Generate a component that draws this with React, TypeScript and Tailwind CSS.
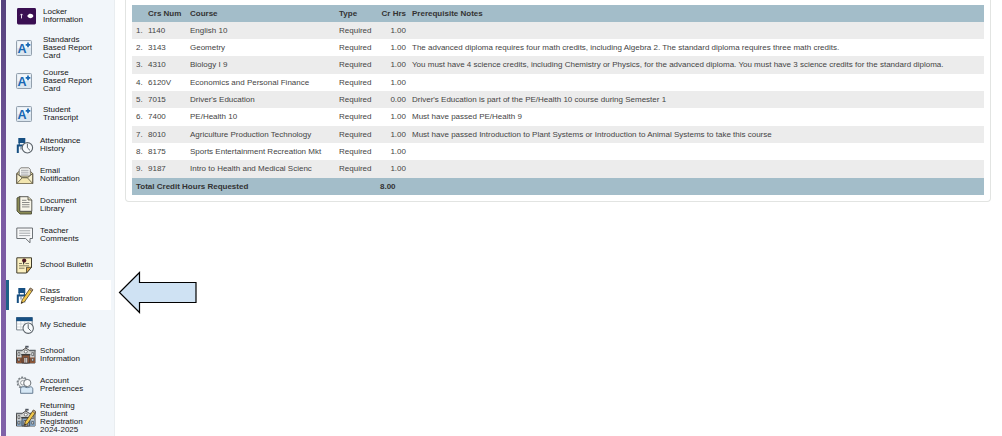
import type { ReactNode } from "react";

function Icon({ children }: { children: ReactNode }) {
  return (
    <svg viewBox="0 0 20 20" className="h-5 w-5 shrink-0" aria-hidden="true">
      {children}
    </svg>
  );
}

function Clock({ x, y }: { x: number; y: number }) {
  return (
    <g transform={`translate(${x} ${y})`}>
      <circle r="5.2" fill="#f7fafc" stroke="#5c646b" strokeWidth="1.1" />
      <path d="M0-4V0L2.6 2.6" fill="none" stroke="#5c646b" strokeWidth="1" />
    </g>
  );
}

function Pencil() {
  return (
    <g strokeLinejoin="round">
      <path d="M7.8 18.4L8.8 14.8L16.8 3.2L19.4 5L11.2 16.6Z" fill="#f2c84b" stroke="#4c3d20" strokeWidth=".8" />
      <path d="M15.9 4.5L17 2.9L19.6 4.7L18.5 6.3Z" fill="#b9a08a" stroke="#4c3d20" strokeWidth=".5" />
      <path d="M7.8 18.4L8.3 16.5L9.6 17.4Z" fill="#222" />
    </g>
  );
}

function LockerIcon() {
  return (
    <Icon>
      <rect x="1" y="2" width="19" height="16.5" rx="1.4" fill="#3a0f52" />
      <path d="M5.5 8v4.4M4.4 9.2l1.1-1.3 1.1 1.3" stroke="#e8deee" strokeWidth="1" fill="none" />
      <path d="M11.2 10c1-1.6 2-2.2 3.3-2.2s2.5.9 2.9 2.2c-.4 1.3-1.6 2.2-2.9 2.2s-2.3-.6-3.3-2.2Z" fill="#fff" />
    </Icon>
  );
}

function GradeIcon() {
  return (
    <Icon>
      <rect x="0.5" y="2.5" width="15" height="15" rx="1" fill="#dbe6ef" stroke="#93a0ad" />
      <path d="M1.5 3.5h13v6.5h-13z" fill="#f2f6fa" />
      <text x="1.6" y="14.6" fontSize="12.5" fontWeight="700" fontFamily="Liberation Sans, sans-serif" fill="#1767b3">
        A
      </text>
      <path d="M12 4.6v4.6M9.7 6.9h4.6" stroke="#1767b3" strokeWidth="1.7" />
    </Icon>
  );
}

function Desk() {
  return (
    <g>
      <path d="M2.3 3h7v5h-7z" fill="#164f82" />
      <path d="M3.2 7.5v2.5M8.4 7.5v2.5" stroke="#164f82" strokeWidth="1.2" />
      <path d="M.8 9.5h9.4v2H2.8V18H.8z" fill="#164f82" />
      <path d="M5 11.5v3M8.8 11.5v6" stroke="#5b6e80" strokeWidth="1" />
    </g>
  );
}

function AttendanceIcon() {
  return (
    <Icon>
      <Desk />
      <Clock x={11.4} y={12.8} />
    </Icon>
  );
}

function EmailIcon() {
  return (
    <Icon>
      <path d="M.8 8.5L5 4.5h7.5l4.2 4V18.5H.8Z" fill="#d9cf9c" stroke="#56503f" strokeWidth=".9" />
      <path d="M3.2 11V4.5L5 2.8h7.8l1.5 1.7V11z" fill="#f7f7f5" stroke="#74736e" strokeWidth=".9" />
      <path d="M5 5.3h7.6M5 7.2h7.6M5 9.1h7.6" stroke="#94979a" strokeWidth=".8" />
      <path d="M.8 8.5l5.4 4.3h5.2l5.3-4.3v10H.8Z" fill="#f8f1cd" stroke="#56503f" strokeWidth=".9" strokeLinejoin="round" />
      <path d="M1 18.3l5.2-5.5h5.2l5.1 5.5" fill="#f2e6b0" stroke="#56503f" strokeWidth=".8" />
    </Icon>
  );
}

function LibraryIcon() {
  return (
    <Icon>
      <path d="M1 3L4 1.5v14l11.5 1v2.5H4L1 16Z" fill="#8a8b55" stroke="#4c4d35" strokeWidth=".9" />
      <path d="M3.8 1.7H12L15.8 5v11.3h-12z" fill="#f8f6ea" stroke="#4b4b45" strokeWidth=".9" />
      <path d="M12 1.7V5h3.8" fill="#d9d3ad" stroke="#4b4b45" strokeWidth=".8" />
      <path d="M6 5.3h4.5M6 7.5h7.5M6 9.7h7.5M6 11.9h7.5" stroke="#7d7e7c" strokeWidth=".9" />
    </Icon>
  );
}

function CommentIcon() {
  return (
    <Icon>
      <path d="M.8 3h15.7v10.5H14v4.3L9.6 13.5H.8z" fill="#f7f8f9" stroke="#5d6368" strokeWidth=".9" strokeLinejoin="round" />
      <path d="M3.2 5.8h11M3.2 8.2h11M3.2 10.6h11" stroke="#9a9ea2" strokeWidth=".9" />
    </Icon>
  );
}

function BulletinIcon() {
  return (
    <Icon>
      <path d="M.8 2.8h14.7v9.5L10.5 18H.8z" fill="#fbf0c0" stroke="#403c2d" />
      <path d="M15.5 12.3h-5V18Z" fill="#d9a74b" stroke="#403c2d" strokeWidth=".8" />
      <path d="M3 8.5h3M9.5 8.5h3.5M3 10.8h10M3 13.2h5.5" stroke="#77705a" strokeWidth=".9" />
      <circle cx="8.2" cy="5.6" r="2.1" fill="#4b1820" />
      <path d="M7.6 7v2.4" stroke="#333" />
    </Icon>
  );
}

function RegistrationIcon() {
  return (
    <Icon>
      <Desk />
      <g transform="translate(-2.6 0)">
        <Pencil />
      </g>
    </Icon>
  );
}

function ScheduleIcon() {
  return (
    <Icon>
      <path d="M.6 2.7h15.6v12.2H.6z" fill="#fff" stroke="#6d7881" strokeWidth=".9" />
      <path d="M.2 2.2h16.4v4H.2z" fill="#164f82" />
      <path d="M.8 9h15M.8 12h8M4.8 6v9M8.8 6v6" stroke="#c3cad0" strokeWidth=".7" />
      <Clock x={12.2} y={13.2} />
    </Icon>
  );
}

function School({ base }: { base: string }) {
  return (
    <g>
      <path d="M9.7.8v4" stroke="#444" strokeWidth=".8" />
      <path d="M10 .8h2.6v1.8H10z" fill="#4d5560" />
      <path d="M.5 5.5H6L9.8 3 13.6 5.5H19V18H.5z" fill="#d3d4d3" stroke="#3c3a3a" strokeWidth=".9" strokeLinejoin="round" />
      <path d="M1 12.5h18V18H1z" fill={base} />
      <path d="M0 5.5h6M13.6 5.5h6" stroke="#62676c" strokeWidth="1.4" />
      <circle cx="9.8" cy="6.6" r="1.5" fill="#fff" stroke="#333" strokeWidth=".6" />
      <path
        d="M2 7.6h1.8v3H2zM2 13.6h1.8v2.4H2zM15.8 7.6h1.8v3h-1.8zM15.8 13.6h1.8v2.4h-1.8z"
        fill="#eef3f7"
        stroke="#333"
        strokeWidth=".6"
      />
      <path d="M6 10h7.6v8H6z" fill={base} stroke="#353535" strokeWidth=".7" />
      <path d="M5.2 9.6h9.2" stroke="#3d3d3d" strokeWidth="1.2" />
      <path d="M8 12.5h3.6V18H8z" fill="#e8e4de" stroke="#3a2a28" strokeWidth=".6" />
      <path d="M9.8 12.5V18" stroke="#3a2a28" strokeWidth=".6" />
    </g>
  );
}

function SchoolIcon() {
  return (
    <Icon>
      <School base="#8f5738" />
    </Icon>
  );
}

function AccountIcon() {
  return (
    <Icon>
      <circle cx="6.6" cy="7.6" r="5.2" fill="none" stroke="#7a8085" strokeWidth="1.6" strokeDasharray="2 1.2" />
      <circle cx="6.6" cy="7.6" r="4.4" fill="#f2f4f5" stroke="#7a8085" strokeWidth=".8" />
      <circle cx="6.8" cy="7.8" r="2.2" fill="#fff" stroke="#7a8085" strokeWidth=".8" />
      <circle cx="11.3" cy="8" r="3.6" fill="#f9fafa" stroke="#5f656b" strokeWidth=".9" />
      <path
        d="M4.6 18.3v-4.1c0-1.4 1-2.4 2.4-2.4h1.4c1.8 1.1 4 1.1 5.8 0h.4c1.4 0 2.2 1 2.2 2.4v4.1z"
        fill="#d5e7f5"
        stroke="#5a7088"
        strokeWidth=".9"
      />
    </Icon>
  );
}

function ReturningIcon() {
  return (
    <Icon>
      <School base="#86a3bf" />
      <g transform="translate(.5 -1)">
        <Pencil />
      </g>
    </Icon>
  );
}

type Item = { lines: string[]; icon: () => ReactNode; size: string; active?: boolean };

const items: Item[] = [
  { lines: ["Locker", "Information"], icon: LockerIcon, size: "h-[31px] gap-[7px]" },
  { lines: ["Standards", "Based Report", "Card"], icon: GradeIcon, size: "h-[33px] gap-[7px]" },
  { lines: ["Course", "Based Report", "Card"], icon: GradeIcon, size: "h-[33px] gap-[7px]" },
  { lines: ["Student", "Transcript"], icon: GradeIcon, size: "h-[33px] gap-[7px]" },
  { lines: ["Attendance", "History"], icon: AttendanceIcon, size: "h-[30px] gap-1" },
  { lines: ["Email", "Notification"], icon: EmailIcon, size: "h-[30px] gap-1" },
  { lines: ["Document", "Library"], icon: LibraryIcon, size: "h-[30px] gap-1" },
  { lines: ["Teacher", "Comments"], icon: CommentIcon, size: "h-[30px] gap-1" },
  { lines: ["School Bulletin"], icon: BulletinIcon, size: "h-[30px] gap-1" },
  { lines: ["Class", "Registration"], icon: RegistrationIcon, size: "h-[30px] gap-1", active: true },
  { lines: ["My Schedule"], icon: ScheduleIcon, size: "h-[30px] gap-1" },
  { lines: ["School", "Information"], icon: SchoolIcon, size: "h-[30px] gap-1" },
  { lines: ["Account", "Preferences"], icon: AccountIcon, size: "h-[30px] gap-1" },
  { lines: ["Returning", "Student", "Registration", "2024-2025"], icon: ReturningIcon, size: "h-[36px] gap-1" },
];

const courses = [
  ["1140", "English 10", "1.00", ""],
  ["3143", "Geometry", "1.00", "The advanced diploma requires four math credits, including Algebra 2. The standard diploma requires three math credits."],
  ["4310", "Biology I 9", "1.00", "You must have 4 science credits, including Chemistry or Physics, for the advanced diploma. You must have 3 science credits for the standard diploma."],
  ["6120V", "Economics and Personal Finance", "1.00", ""],
  ["7015", "Driver's Education", "0.00", "Driver's Education is part of the PE/Health 10 course during Semester 1"],
  ["7400", "PE/Health 10", "1.00", "Must have passed PE/Health 9"],
  ["8010", "Agriculture Production Technology", "1.00", "Must have passed Introduction to Plant Systems or Introduction to Animal Systems to take this course"],
  ["8175", "Sports Entertainment Recreation Mkt", "1.00", ""],
  ["9187", "Intro to Health and Medical Scienc", "1.00", ""],
];

function Sidebar() {
  return (
    <nav className="flex w-[115px] shrink-0 border-r border-[#e9edf0] bg-[#f2f6fa]">
      <div className="w-[6px] shrink-0 border-l border-white bg-gradient-to-b from-[#56437d] via-[#7b5ba3] to-[#8062a8]" />
      <ul className="min-w-0 flex-1 pr-[3px]">
        {items.map(({ lines, icon: ItemIcon, size, active }) => (
          <li key={lines.join(" ")}>
            <a
              href="#"
              aria-current={active ? "page" : undefined}
              className={`flex items-center border-l-[3px] pl-[7px] text-[8px] leading-[8px] text-[#151515] ${size} ${
                active ? "border-[#1f6187] bg-white" : "border-transparent"
              }`}
            >
              <ItemIcon />
              <span className="whitespace-nowrap">
                {lines.map((line) => (
                  <span key={line} className="block">
                    {line}
                  </span>
                ))}
              </span>
            </a>
          </li>
        ))}
      </ul>
    </nav>
  );
}

function CourseTable() {
  return (
    <table className="w-full table-fixed border-collapse text-left text-[8px] leading-[12px] whitespace-nowrap text-[#444]">
      <colgroup>
        <col className="w-[16px]" />
        <col className="w-[42px]" />
        <col className="w-[149px]" />
        <col className="w-[37px]" />
        <col className="w-[36px]" />
        <col />
      </colgroup>
      <thead>
        <tr className="h-[17px] bg-[#a3bdc9] text-[#333]">
          <th className="p-0" />
          <th className="p-0 font-bold">Crs Num</th>
          <th className="p-0 font-bold">Course</th>
          <th className="p-0 font-bold">Type</th>
          <th className="p-0 pr-[6px] text-right font-bold">Cr Hrs</th>
          <th className="p-0 font-bold">Prerequisite Notes</th>
        </tr>
      </thead>
      <tbody>
        {courses.map(([num, name, hours, notes], i) => (
          <tr key={num} className="h-[17px] odd:bg-[#ececec] even:bg-white [&:nth-child(3n)]:h-[18px]">
            <td className="p-0 pl-1">{i + 1}.</td>
            <td className="p-0">{num}</td>
            <td className="p-0">{name}</td>
            <td className="p-0">Required</td>
            <td className="p-0 pr-[6px] text-right">{hours}</td>
            <td className="p-0">{notes}</td>
          </tr>
        ))}
      </tbody>
      <tfoot>
        <tr className="h-[17px] bg-[#a3bdc9] text-[#333]">
          <th colSpan={4} className="p-0 pl-1 font-bold">
            Total Credit Hours Requested
          </th>
          <td className="p-0 pl-1 font-bold">8.00</td>
          <td className="p-0" />
        </tr>
      </tfoot>
    </table>
  );
}

export default function App() {
  return (
    <div className="relative flex min-h-screen bg-white font-['Liberation_Sans',Arial,sans-serif]">
      <Sidebar />
      <main className="min-w-0 flex-1 pr-[11px] pl-[10px]">
        <section className="rounded-b border border-t-0 border-[#e2e4e2] px-[6px] pt-[5px] pb-[6px]">
          <CourseTable />
        </section>
      </main>
      <svg
        viewBox="0 0 80 44"
        className="absolute top-[270px] left-[118px] h-[44px] w-[80px]"
        role="img"
        aria-label="Arrow pointing to Class Registration"
      >
        <path
          d="M1.5 22.5L21.5 2.5V12.5H78V32.5H21.5V42.5Z"
          fill="#cfe2f3"
          stroke="#000"
          strokeWidth="1.2"
        />
      </svg>
    </div>
  );
}
